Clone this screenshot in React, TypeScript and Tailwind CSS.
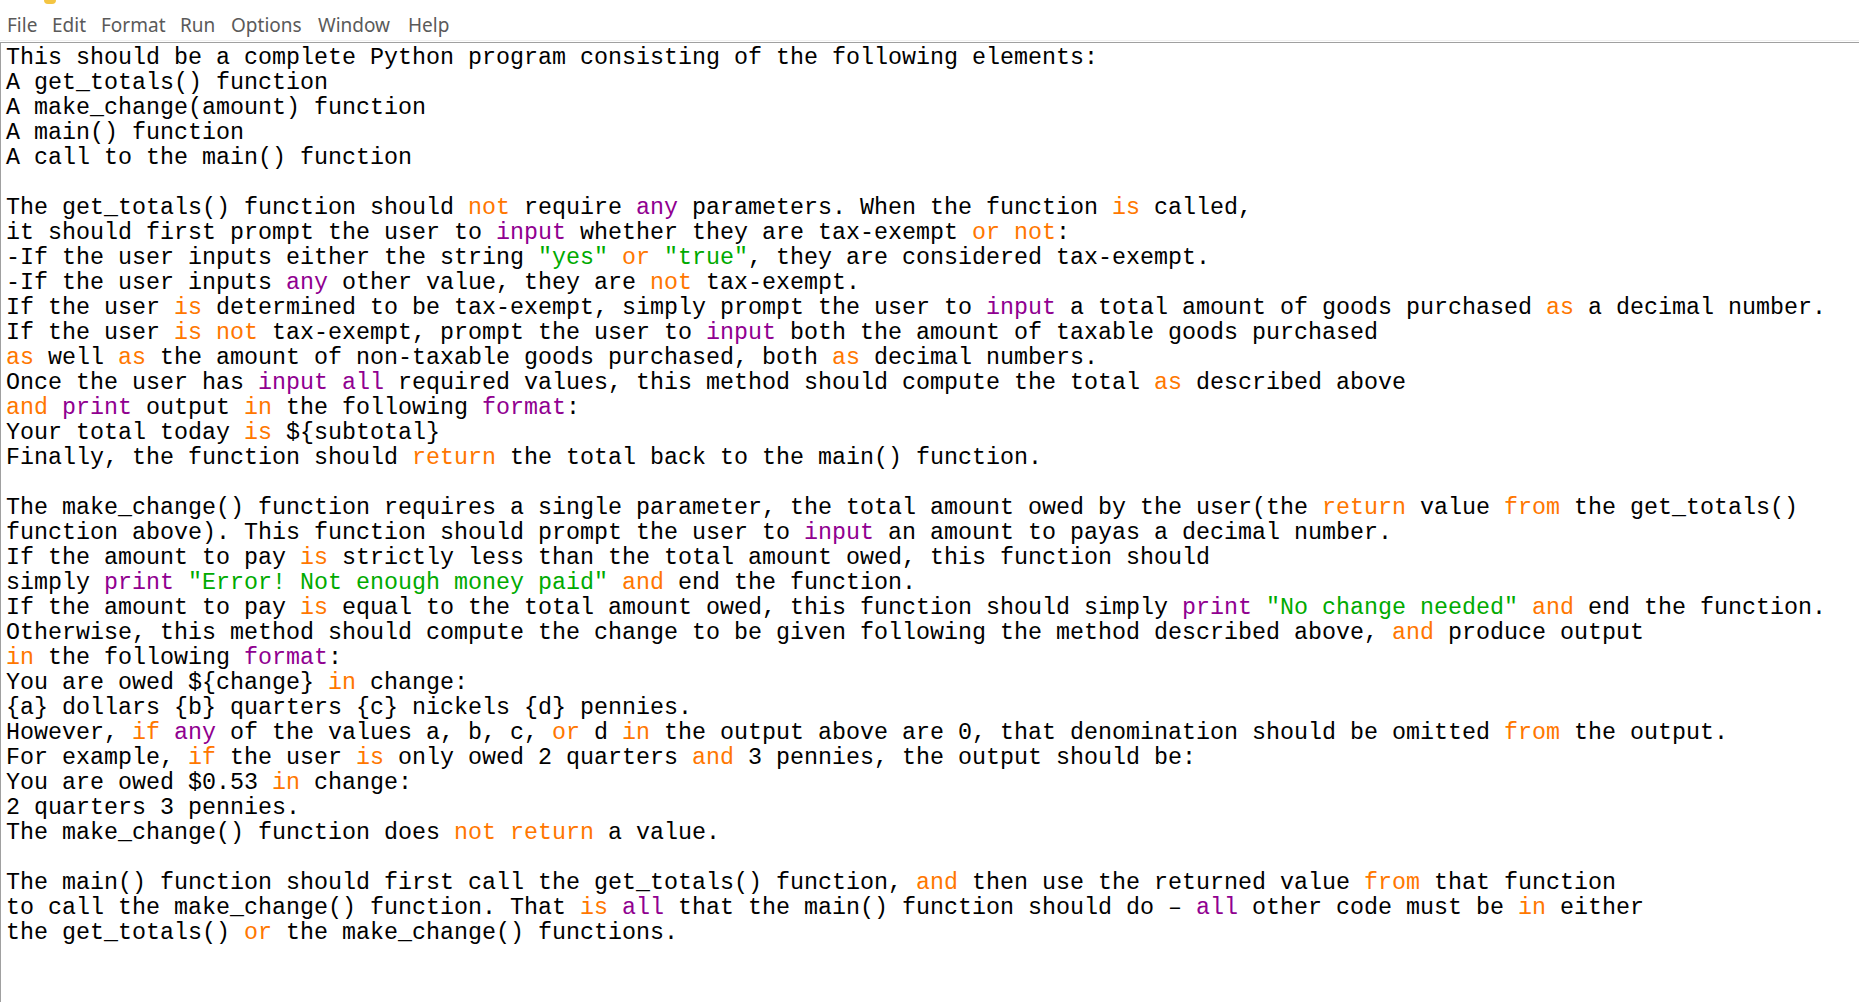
import React from "react";

const KEYWORDS = new Set(["not", "is", "or", "and", "as", "in", "if", "return", "from"]);
const BUILTINS = new Set(["any", "input", "print", "all", "format"]);

const LINES: string[] = [
  "This should be a complete Python program consisting of the following elements:",
  "A get_totals() function",
  "A make_change(amount) function",
  "A main() function",
  "A call to the main() function",
  "",
  "The get_totals() function should not require any parameters. When the function is called,",
  "it should first prompt the user to input whether they are tax-exempt or not:",
  '-If the user inputs either the string "yes" or "true", they are considered tax-exempt.',
  "-If the user inputs any other value, they are not tax-exempt.",
  "If the user is determined to be tax-exempt, simply prompt the user to input a total amount of goods purchased as a decimal number.",
  "If the user is not tax-exempt, prompt the user to input both the amount of taxable goods purchased",
  "as well as the amount of non-taxable goods purchased, both as decimal numbers.",
  "Once the user has input all required values, this method should compute the total as described above",
  "and print output in the following format:",
  "Your total today is ${subtotal}",
  "Finally, the function should return the total back to the main() function.",
  "",
  "The make_change() function requires a single parameter, the total amount owed by the user(the return value from the get_totals()",
  "function above). This function should prompt the user to input an amount to payas a decimal number.",
  "If the amount to pay is strictly less than the total amount owed, this function should",
  'simply print "Error! Not enough money paid" and end the function.',
  'If the amount to pay is equal to the total amount owed, this function should simply print "No change needed" and end the function.',
  "Otherwise, this method should compute the change to be given following the method described above, and produce output",
  "in the following format:",
  "You are owed ${change} in change:",
  "{a} dollars {b} quarters {c} nickels {d} pennies.",
  "However, if any of the values a, b, c, or d in the output above are 0, that denomination should be omitted from the output.",
  "For example, if the user is only owed 2 quarters and 3 pennies, the output should be:",
  "You are owed $0.53 in change:",
  "2 quarters 3 pennies.",
  "The make_change() function does not return a value.",
  "",
  "The main() function should first call the get_totals() function, and then use the returned value from that function",
  "to call the make_change() function. That is all that the main() function should do \u2013 all other code must be in either",
  "the get_totals() or the make_change() functions.",
];

function renderLine(line: string, li: number) {
  const parts: React.ReactNode[] = [];
  const re = /("[^"]*")|([A-Za-z_]+)/g;
  let last = 0;
  let m: RegExpExecArray | null;
  let k = 0;
  while ((m = re.exec(line)) !== null) {
    if (m.index > last) parts.push(line.slice(last, m.index));
    if (m[1]) {
      parts.push(
        <span key={k++} className="text-[#00aa00]">
          {m[1]}
        </span>
      );
    } else {
      const w = m[2];
      if (KEYWORDS.has(w)) {
        parts.push(
          <span key={k++} className="text-[#ff7700]">
            {w}
          </span>
        );
      } else if (BUILTINS.has(w)) {
        parts.push(
          <span key={k++} className="text-[#900090]">
            {w}
          </span>
        );
      } else {
        parts.push(w);
      }
    }
    last = m.index + m[0].length;
  }
  if (last < line.length) parts.push(line.slice(last));
  return (
    <div key={li} className="h-[25px] whitespace-pre">
      {parts.length ? parts : "\u00a0"}
    </div>
  );
}

const MENU: { label: string; w: string }[] = [
  { label: "File", w: "w-[45px]" },
  { label: "Edit", w: "w-[49px]" },
  { label: "Format", w: "w-[79px]" },
  { label: "Run", w: "w-[51px]" },
  { label: "Options", w: "w-[87px]" },
  { label: "Window", w: "w-[90px]" },
  { label: "Help", w: "w-[43px]" },
];

export default function App() {
  return (
    <div className="flex h-[1002px] w-[1859px] flex-col overflow-hidden bg-white">
      <div className="relative h-[8px] overflow-hidden">
        <div className="absolute left-[44px] top-[-6px] h-[10px] w-[12px] rounded-sm bg-[#f4c542]" />
      </div>
      <div
        className="flex h-[33px] items-center border-b border-[#f0f0f0] pl-[7px] pt-[2px] text-[19px] text-[#5a5a5a]"
        style={{ fontFamily: '"Noto Sans", "Open Sans", sans-serif' }}
      >
        {MENU.map((m) => (
          <div key={m.label} className={`${m.w} leading-[30px]`}>
            {m.label}
          </div>
        ))}
      </div>
      <div
        className="mt-[1px] flex-1 border-l border-t border-[#a0a0a0] pl-[5px] pt-[3px] text-[23.33px] leading-[25px] text-black"
        style={{ fontFamily: '"Liberation Mono", "Courier New", monospace' }}
      >
        {LINES.map((l, i) => renderLine(l, i))}
      </div>
    </div>
  );
}
